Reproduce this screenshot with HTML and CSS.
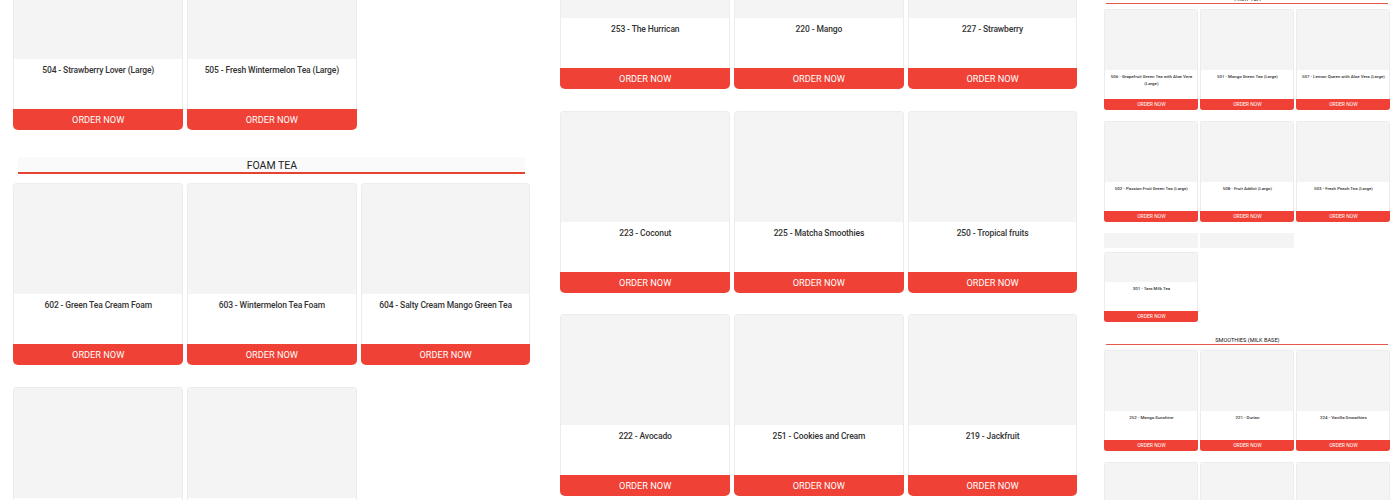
FILE: index.html
```html
<!DOCTYPE html>
<html lang="en">
<head>
    <meta charset="UTF-8">
    <meta name="viewport" content="width=device-width, initial-scale=1.0">
    <title>Menu</title>
    <link rel="stylesheet" href="styles.css">
</head>
<body>
    <div class="page">
        <div class="menu menu-left">
            <div class="product-grid">
                <div class="card"><div class="thumb"></div><p class="name">504 - Strawberry Lover (Large)</p><a class="btn">ORDER NOW</a></div>
                <div class="card"><div class="thumb"></div><p class="name">505 - Fresh Wintermelon Tea (Large)</p><a class="btn">ORDER NOW</a></div>
            </div>
            <h3 class="section-title">FOAM TEA</h3>
            <div class="product-grid">
                <div class="card"><div class="thumb"></div><p class="name">602 - Green Tea Cream Foam</p><a class="btn">ORDER NOW</a></div>
                <div class="card"><div class="thumb"></div><p class="name">603 - Wintermelon Tea Foam</p><a class="btn">ORDER NOW</a></div>
                <div class="card"><div class="thumb"></div><p class="name">604 - Salty Cream Mango Green Tea</p><a class="btn">ORDER NOW</a></div>
                <div class="card"><div class="thumb"></div></div>
                <div class="card"><div class="thumb"></div></div>
            </div>
        </div>

        <div class="menu menu-middle">
            <div class="product-grid">
                <div class="card"><div class="thumb"></div><p class="name">253 - The Hurrican</p><a class="btn">ORDER NOW</a></div>
                <div class="card"><div class="thumb"></div><p class="name">220 - Mango</p><a class="btn">ORDER NOW</a></div>
                <div class="card"><div class="thumb"></div><p class="name">227 - Strawberry</p><a class="btn">ORDER NOW</a></div>
                <div class="card"><div class="thumb"></div><p class="name">223 - Coconut</p><a class="btn">ORDER NOW</a></div>
                <div class="card"><div class="thumb"></div><p class="name">225 - Matcha Smoothies</p><a class="btn">ORDER NOW</a></div>
                <div class="card"><div class="thumb"></div><p class="name">250 - Tropical fruits</p><a class="btn">ORDER NOW</a></div>
                <div class="card"><div class="thumb"></div><p class="name">222 - Avocado</p><a class="btn">ORDER NOW</a></div>
                <div class="card"><div class="thumb"></div><p class="name">251 - Cookies and Cream</p><a class="btn">ORDER NOW</a></div>
                <div class="card"><div class="thumb"></div><p class="name">219 - Jackfruit</p><a class="btn">ORDER NOW</a></div>
            </div>
        </div>

        <div class="menu menu-right">
            <h3 class="section-title">FRUIT TEA</h3>
            <div class="product-grid">
                <div class="card"><div class="thumb"></div><p class="name">506 - Grapefruit Green Tea with Aloe Vera (Large)</p><a class="btn">ORDER NOW</a></div>
                <div class="card"><div class="thumb"></div><p class="name">501 - Mango Green Tea (Large)</p><a class="btn">ORDER NOW</a></div>
                <div class="card"><div class="thumb"></div><p class="name">507 - Lemon Queen with Aloe Vera (Large)</p><a class="btn">ORDER NOW</a></div>
                <div class="card"><div class="thumb"></div><p class="name">502 - Passion Fruit Green Tea (Large)</p><a class="btn">ORDER NOW</a></div>
                <div class="card"><div class="thumb"></div><p class="name">508 - Fruit Addict (Large)</p><a class="btn">ORDER NOW</a></div>
                <div class="card"><div class="thumb"></div><p class="name">503 - Fresh Peach Tea (Large)</p><a class="btn">ORDER NOW</a></div>
                <div class="stub"></div>
                <div class="stub"></div>
                <div class="stub-spacer"></div>
                <div class="card card-short"><div class="thumb"></div><p class="name">301 - Taro Milk Tea</p><a class="btn">ORDER NOW</a></div>
            </div>
            <h3 class="section-title">SMOOTHIES (MILK BASE)</h3>
            <div class="product-grid">
                <div class="card"><div class="thumb"></div><p class="name">252 - Mango Sunshine</p><a class="btn">ORDER NOW</a></div>
                <div class="card"><div class="thumb"></div><p class="name">221 - Durian</p><a class="btn">ORDER NOW</a></div>
                <div class="card"><div class="thumb"></div><p class="name">224 - Vanilla Smoothies</p><a class="btn">ORDER NOW</a></div>
                <div class="card"><div class="thumb"></div></div>
                <div class="card"><div class="thumb"></div></div>
                <div class="card"><div class="thumb"></div></div>
            </div>
        </div>
    </div>
</body>
</html>
```
FILE: styles.css
```css
html, body {
    margin: 0;
    height: 500px;
    overflow: hidden;
    background-color: #fff;
}
body {
    font-family: "Roboto", Arial, sans-serif;
    color: #333;
}
.page {
    display: flex;
    padding-left: 13.4px;
}
.menu {
    flex: none;
    width: 517px;
}
/* the photo starts part way down the full page, so the columns begin above the fold */
.menu-left {
    margin-top: -52px;
}
.menu-middle {
    margin-top: -93px;
    margin-left: 30px;
    margin-right: 27px;
}
.menu-right {
    width: 286px;
    margin-top: -4px;
}
.product-grid {
    display: grid;
    grid-template-columns: repeat(3, 1fr);
    column-gap: 4px;
    row-gap: 21.5px;
}
.card {
    display: flex;
    flex-direction: column;
    height: 182px;
    box-sizing: border-box;
    border: 1px solid #ececec;
    border-bottom: none;
    border-radius: 4px;
    background: #fff;
}
.thumb {
    flex: none;
    height: 110px;
    border-radius: 3px 3px 0 0;
    background-color: #f4f4f5;
}
.name {
    flex: 1;
    margin: 0;
    padding: 5px 6px 0;
    font-size: 8.5px;
    font-weight: 500;
    letter-spacing: -0.12px;
    line-height: 13px;
    text-align: center;
}
.btn {
    flex: none;
    height: 21px;
    line-height: 21px;
    margin: 0 -1px;
    border-radius: 0 0 5px 5px;
    background-color: #ef4135;
    color: #fff;
    font-size: 9.2px;
    text-align: center;
}
.section-title {
    margin: 27px 5px 9px;
    height: 15px;
    background-color: #fafafa;
    border-bottom: 2px solid #e5432f;
    color: #222;
    font-size: 10.5px;
    font-weight: 400;
    line-height: 17px;
    text-align: center;
}
/* right column is the same layout at a smaller scale */
.menu-right .product-grid {
    column-gap: 2px;
    row-gap: 11px;
}
.menu-right .card {
    height: 101px;
    border-radius: 2px;
}
.menu-right .thumb {
    height: 60px;
}
.menu-right .name {
    padding: 3px 3px 0;
    font-size: 4.4px;
    letter-spacing: 0;
    line-height: 7px;
}
.menu-right .btn {
    height: 11px;
    line-height: 11px;
    border-radius: 0 0 3px 3px;
    font-size: 5px;
}
.menu-right .section-title {
    margin: 0 2px 5px;
    height: 7px;
    background-color: transparent;
    border-bottom: 1px solid #e5574a;
    color: #111;
    font-size: 5.6px;
    line-height: 7px;
}
.menu-right .card-short {
    height: 70px;
}
.menu-right .card-short .thumb {
    height: 29px;
}
.stub {
    height: 15px;
    background-color: #f4f4f5;
    margin-bottom: -7px;
}
.stub-spacer {
    height: 15px;
    margin-bottom: -7px;
}
.menu-right .product-grid + .section-title {
    margin-top: 14.5px;
}
```
